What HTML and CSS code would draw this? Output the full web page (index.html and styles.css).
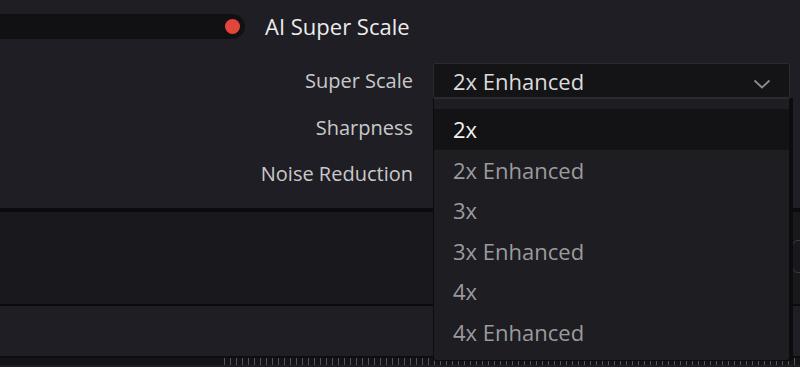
FILE: index.html
```html
<!doctype html>
<html>
<head>
	<meta charset="utf-8" />
	<title>AI Super Scale</title>
	<link rel="stylesheet" href="styles.css">
</head>
<body>
	<main class="inspector">

		<div class="section-head">
			<div class="toggle-bar"><span class="dot"></span></div>
			<h1>AI Super Scale</h1>
		</div>

		<div class="params">
			<div class="param">
				<label>Super Scale</label>
				<div class="select">
					<span>2x Enhanced</span>
					<svg class="chev" width="18" height="10" viewBox="0 0 18 10"><path d="M1.5 1.5 L9 8.5 L16.5 1.5" fill="none" stroke="#8c8c90" stroke-width="1.8"/></svg>
				</div>
			</div>
			<div class="param">
				<label>Sharpness</label>
			</div>
			<div class="param">
				<label>Noise Reduction</label>
			</div>
		</div>

		<div class="panel panel-dark"></div>
		<div class="panel panel-light"></div>
		<div class="ruler"></div>

		<div class="side-knob"></div>

		<ul class="menu">
			<li class="active">2x</li>
			<li>2x Enhanced</li>
			<li>3x</li>
			<li>3x Enhanced</li>
			<li>4x</li>
			<li>4x Enhanced</li>
		</ul>

	</main>
</body>
</html>
```

FILE: styles.css
```css
*, *::before, *::after {
	box-sizing: border-box;
}

html, body {
	margin: 0;
	padding: 0;
	background: #1f1e24;
}

body {
	width: 800px;
	height: 367px;
	overflow: hidden;
	font-family: "Open Sans", "Noto Sans", sans-serif;
}

.inspector {
	position: relative;
	height: 367px;
}

.section-head {
	display: flex;
	align-items: center;
	height: 52px;
}

.toggle-bar {
	width: 245px;
	height: 25px;
	background: #111113;
	border-radius: 0 13px 13px 0;
	display: flex;
	justify-content: flex-end;
	align-items: center;
	padding-right: 5px;
}

.dot {
	width: 15px;
	height: 15px;
	border-radius: 50%;
	background: #e2463b;
}

h1 {
	margin: 0 0 0 20px;
	font-size: 22px;
	font-weight: 500;
	color: #ececec;
}

.params {
	padding-top: 11px;
	height: 156px;
}

.param {
	display: flex;
	align-items: center;
	height: 46px;
}

.param:first-child {
	height: 35px;
	margin-bottom: 6px;
}

.param label {
	width: 413px;
	text-align: right;
	font-size: 20px;
	color: #c9c9cb;
}

.select {
	margin-left: 20px;
	width: 357px;
	height: 35px;
	background: #141417;
	border: 1px solid #2b2a30;
	border-radius: 2px;
	display: flex;
	align-items: center;
	justify-content: space-between;
	padding: 0 18px 0 19px;
	font-size: 22px;
	color: #dcdcdc;
}

.chev {
	margin-top: 6px;
}

.panel {
	border-top: 4px solid #0b0b0d;
}

.panel-dark {
	height: 96px;
	background: #19181d;
}

.panel-light {
	border-top-width: 2px;
	height: 54px;
	background: #1f1e24;
	border-bottom: 2px solid #0d0d10;
}

.ruler {
	height: 7px;
	background:
		repeating-linear-gradient(90deg, transparent 0 4px, #55555a 4px 5px, transparent 5px 6px) 220px 0 / 580px 100% no-repeat,
		#141417;
}

.side-knob {
	position: absolute;
	left: 792px;
	top: 240px;
	width: 20px;
	height: 33px;
	border: 1px solid #3a393f;
	border-radius: 6px;
}

.menu {
	position: absolute;
	left: 433px;
	top: 98px;
	width: 357px;
	height: 263px;
	margin: 0;
	padding: 10px 0 0;
	list-style: none;
	background: #1e1d22;
	border: 1px solid #0c0c0e;
	border-top-color: #2b2a30;
	border-radius: 0 0 3px 3px;
	box-shadow: 3px 0 0 #0c0c0e;
}

.menu li {
	height: 40.6px;
	line-height: 40px;
	padding-left: 19px;
	font-size: 22px;
	color: #9b9b9e;
}

.menu li.active {
	background: #131316;
	color: #f2f2f2;
}
```
